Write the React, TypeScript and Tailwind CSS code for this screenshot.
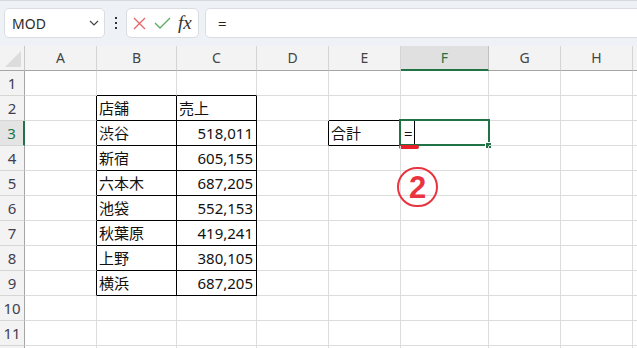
import React from 'react';

const cols = ['A', 'B', 'C', 'D', 'E', 'F', 'G', 'H', 'I'];
const rows = [1, 2, 3, 4, 5, 6, 7, 8, 9, 10, 11, 12];

// cell contents keyed by "row-col"
const data: Record<string, { text: string; num?: boolean }> = {
  '2-1': { text: '店舗' },
  '2-2': { text: '売上' },
  '3-1': { text: '渋谷' },
  '3-2': { text: '518,011', num: true },
  '4-1': { text: '新宿' },
  '4-2': { text: '605,155', num: true },
  '5-1': { text: '六本木' },
  '5-2': { text: '687,205', num: true },
  '6-1': { text: '池袋' },
  '6-2': { text: '552,153', num: true },
  '7-1': { text: '秋葉原' },
  '7-2': { text: '419,241', num: true },
  '8-1': { text: '上野' },
  '8-2': { text: '380,105', num: true },
  '9-1': { text: '横浜' },
  '9-2': { text: '687,205', num: true },
  '3-4': { text: '合計' },
};

function inBox(r: number, c: number) {
  return (c >= 1 && c <= 2 && r >= 2 && r <= 9) || (c === 4 && r === 3);
}

function Cell({ r, c }: { r: number; c: number }) {
  const right = inBox(r, c) || inBox(r, c + 1) ? 'border-r-black' : 'border-r-[#dcdcdc]';
  const bottom = inBox(r, c) || inBox(r + 1, c) ? 'border-b-black' : 'border-b-[#dcdcdc]';
  const cell = data[`${r}-${c}`];
  const active = r === 3 && c === 5;

  return (
    <div className={`relative h-[25px] border-r border-b flex items-center ${right} ${bottom} ${cell?.num ? 'justify-end pr-[3px]' : 'pl-[2px]'}`}>
      {cell && <span className="text-[15px] text-[#111] leading-none whitespace-nowrap">{cell.text}</span>}
      {active && (
        <>
          <span className="pl-[1px] text-[15px] text-[#111] leading-none">=</span>
          <div className="absolute left-[13px] top-0 bottom-0 w-px bg-black" />
          <div className="absolute -left-[2px] -top-[2px] -right-[2px] -bottom-[1px] border-2 border-[#217346] pointer-events-none" />
          <div className="absolute -right-[4px] -bottom-[4px] w-[7px] h-[7px] bg-[#217346] border border-white" />
          <div className="absolute -left-[2px] top-[24px] w-[20px] h-[4px] rounded-full bg-[#e8202a]" />
        </>
      )}
    </div>
  );
}

export default function App() {
  return (
    <div className="w-[637px] h-[348px] overflow-hidden bg-white relative" style={{ fontFamily: '"Noto Sans", "Noto Sans CJK JP", sans-serif' }}>
      {/* Toolbar */}
      <div className="h-[46px] bg-[#eef1f5] border-t border-[#d5dae0] flex items-start pt-[7px] pl-[4px]">
        <div className="w-[101px] h-[30px] bg-white border border-[#d9dde2] rounded-[5px] flex items-center pl-[7px] pr-[5px]">
          <span className="text-[14px] text-[#2b2b2b] flex-1">MOD</span>
          <svg width="10" height="6" viewBox="0 0 10 6" className="text-[#444]">
            <path d="M1 1l4 4 4-4" fill="none" stroke="currentColor" strokeWidth="1.2" />
          </svg>
        </div>
        <div className="w-[21px] h-[30px] flex flex-col items-center justify-center gap-[3px]">
          <span className="w-[2px] h-[2px] bg-[#333]" />
          <span className="w-[2px] h-[2px] bg-[#333]" />
          <span className="w-[2px] h-[2px] bg-[#333]" />
        </div>
        <div className="w-[73px] h-[30px] bg-white border border-[#d9dde2] rounded-[5px] flex items-center pl-[6px]">
          <svg width="13" height="13" viewBox="0 0 13 13">
            <path d="M1 1l11 11M12 1L1 12" stroke="#e46a6a" strokeWidth="1.4" fill="none" />
          </svg>
          <svg width="17" height="12" viewBox="0 0 17 12" className="ml-[8px]">
            <path d="M1 6l5 5 10-10" stroke="#5fae62" strokeWidth="1.4" fill="none" />
          </svg>
          <span className="ml-[7px] text-[19px] italic text-[#333] leading-none -mt-[2px]" style={{ fontFamily: '"Liberation Serif", "DejaVu Serif", serif' }}>
            fx
          </span>
        </div>
        <div className="ml-[6px] -mr-2 flex-1 h-[30px] bg-white border border-[#d9dde2] rounded-[5px] flex items-center pl-[12px]">
          <span className="text-[15px] text-[#222]">=</span>
        </div>
      </div>

      {/* Sheet grid */}
      <div className="grid grid-cols-[25px_72px_80px_80px_72px_72px_88px_72px_72px_72px] w-[705px]">
        <div className="relative h-[25px] bg-[#f3f3f3] border-r border-b border-r-[#c8c8c8] border-b-[#a6a6a6] overflow-hidden">
          <div className="absolute right-[3px] bottom-[3px] w-0 h-0 border-l-[16px] border-l-transparent border-b-[16px] border-b-[#dcdcdc]" />
        </div>
        {cols.map((c) => (
          <div
            key={c}
            className={`h-[25px] flex items-center justify-center text-[14px] ${
              c === 'F'
                ? 'bg-[#e0e0e0] border-b-2 border-b-[#217346] text-[#217346] border-r border-r-[#c0c0c0]'
                : 'bg-[#f3f3f3] border-b border-b-[#a6a6a6] text-[#444] border-r border-r-[#d4d4d4]'
            }`}
          >
            <span className="-mt-[1px]">{c === 'I' ? '' : c}</span>
          </div>
        ))}

        {rows.map((r) => (
          <React.Fragment key={r}>
            <div
              className={`h-[25px] border-b border-b-[#d6d6d6] flex items-center justify-center text-[15px] ${
                r === 3
                  ? 'bg-[#e4e4e4] text-[#217346] border-r-2 border-r-[#217346]'
                  : 'bg-[#f3f3f3] text-[#3f3f50] border-r border-r-[#a6a6a6]'
              }`}
            >
              {r < 12 ? r : ''}
            </div>
            {cols.map((_, ci) => (
              <Cell key={ci} r={r} c={ci} />
            ))}
          </React.Fragment>
        ))}
      </div>

      {/* Step marker */}
      <div className="absolute left-[397px] top-[167px] w-[41px] h-[40px] rounded-full border-[2.5px] border-[#e8343f] flex items-center justify-center">
        <span className="text-[31px] font-bold text-[#e8343f] leading-none" style={{ fontFamily: '"Liberation Sans", sans-serif' }}>
          2
        </span>
      </div>
    </div>
  );
}
